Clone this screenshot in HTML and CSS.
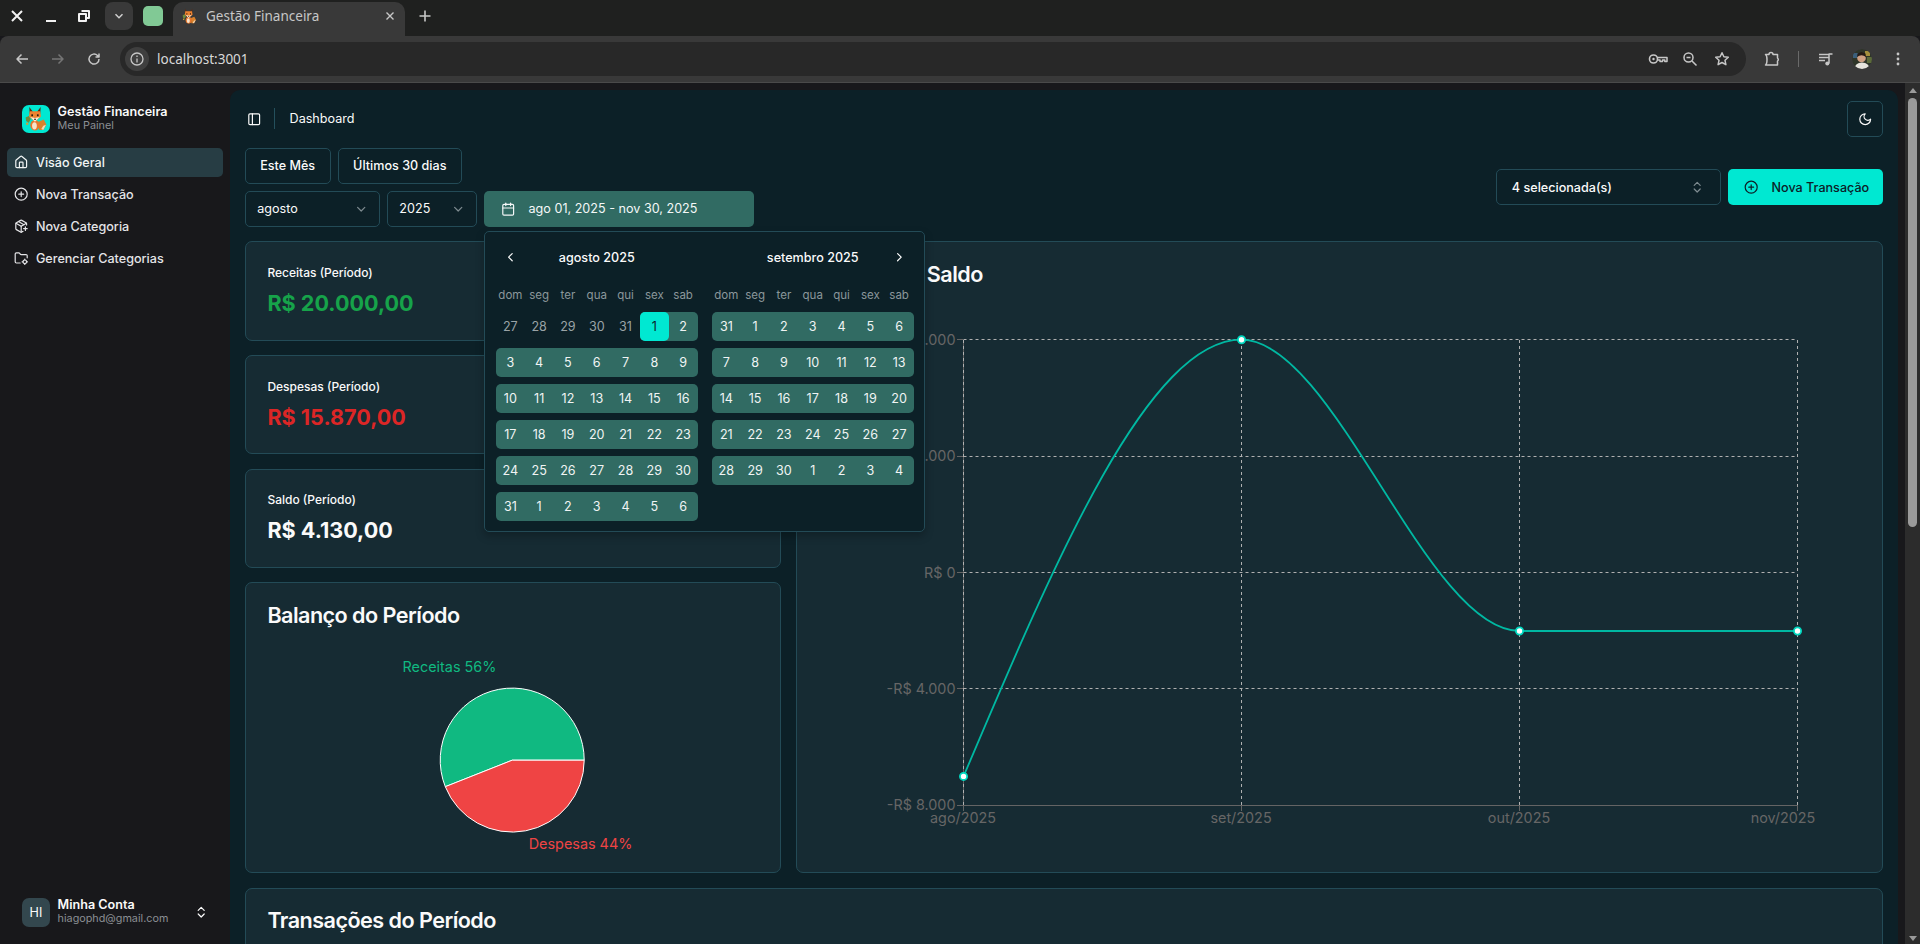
FILE: index.html
```html
<!DOCTYPE html>
<html lang="pt-BR">
<head>
    <meta charset="UTF-8">
    <title>Gestão Financeira</title>
    <link rel="stylesheet" href="styles.css">
</head>
<body>
    <svg class="icon-defs">
        <symbol id="i-panel" viewBox="0 0 24 24"><rect x="3" y="3" width="18" height="18" rx="2"/><path d="M9 3v18"/></symbol>
        <symbol id="i-house" viewBox="0 0 24 24"><path d="M15 21v-8a1 1 0 0 0-1-1h-4a1 1 0 0 0-1 1v8"/><path d="M3 10a2 2 0 0 1 .709-1.528l7-5.999a2 2 0 0 1 2.582 0l7 5.999A2 2 0 0 1 21 10v9a2 2 0 0 1-2 2H5a2 2 0 0 1-2-2z"/></symbol>
        <symbol id="i-plus-circle" viewBox="0 0 24 24"><circle cx="12" cy="12" r="10"/><path d="M8 12h8"/><path d="M12 8v8"/></symbol>
        <symbol id="i-package" viewBox="0 0 24 24"><path d="M16 16h6"/><path d="M19 13v6"/><path d="M21 10V8a2 2 0 0 0-1-1.730l-7-4a2 2 0 0 0-2 0l-7 4A2 2 0 0 0 3 8v8a2 2 0 0 0 1 1.730l7 4a2 2 0 0 0 2 0l2-1.140"/><path d="m7.500 4.270 9 5.150"/><path d="M3.290 7 12 12l8.710-5"/><path d="M12 22V12"/></symbol>
        <symbol id="i-folder" viewBox="0 0 24 24"><path d="M10.300 20H4a2 2 0 0 1-2-2V5a2 2 0 0 1 2-2h3.900a2 2 0 0 1 1.690.9l.81 1.200a2 2 0 0 0 1.670.9H20a2 2 0 0 1 2 2v3.300"/><circle cx="18" cy="18" r="3"/><path d="M18 13.500V15"/><path d="M18 21v1.500"/><path d="M22.500 18H21"/><path d="M15 18h-1.500"/></symbol>
        <symbol id="i-moon" viewBox="0 0 24 24"><path d="M12 3a6 6 0 0 0 9 9 9 9 0 1 1-9-9Z"/></symbol>
        <symbol id="i-down" viewBox="0 0 24 24"><path d="m6 9 6 6 6-6"/></symbol>
        <symbol id="i-updown" viewBox="0 0 24 24"><path d="m7 15 5 5 5-5"/><path d="m7 9 5-5 5 5"/></symbol>
        <symbol id="i-left" viewBox="0 0 24 24"><path d="m15 18-6-6 6-6"/></symbol>
        <symbol id="i-right" viewBox="0 0 24 24"><path d="m9 18 6-6-6-6"/></symbol>
        <symbol id="i-calendar" viewBox="0 0 24 24"><path d="M8 2v4"/><path d="M16 2v4"/><rect x="3" y="4" width="18" height="18" rx="2"/><path d="M3 10h18"/></symbol>
        <symbol id="i-fox" viewBox="0 0 24 24">
            <path fill="#d9822b" d="M15 15l5-2 2.500 5-3 5h-4z"/>
            <path fill="#f4d9b8" d="M19.500 19l2.500-1-2.500 5-2-1z"/>
            <ellipse cx="11.500" cy="18.500" rx="4.500" ry="5" fill="#e8762a"/>
            <ellipse cx="11" cy="19" rx="2.300" ry="3.500" fill="#f6e3cc"/>
            <path fill="#6f8a3c" d="M2.500 11l3-1.500 2 3-2 3.500-2.500-1.500z"/>
            <circle cx="4" cy="17" r="1.200" fill="#c9a03c"/>
            <path fill="#5a2c14" d="M6 1l3.500 4.500L6.500 8zM17 1l-3.500 4.500L16.500 8z"/>
            <path fill="#ee8330" d="M6.500 5h10l.8 5-5.800 5-5.800-5z"/>
            <path fill="#fbeedd" d="M7 10.500l4.500 1 4.500-1-4.500 4.500z"/>
            <rect x="8" y="8" width="1.600" height="1.800" fill="#2a1a10"/>
            <rect x="13.400" y="8" width="1.600" height="1.800" fill="#2a1a10"/>
            <rect x="10.800" y="12.200" width="1.500" height="1.200" fill="#2a1a10"/>
        </symbol>
    </svg>

    <div class="browser-tabs">
        <span class="win-btn"><svg class="chrome-icon" viewBox="0 0 16 16"><path d="M3 3l10 10M13 3L3 13" stroke-width="2"/></svg></span>
        <span class="win-btn"><svg class="chrome-icon" viewBox="0 0 16 16"><path d="M3 13h10" stroke-width="2"/></svg></span>
        <span class="win-btn win-btn-narrow"><svg class="chrome-icon" viewBox="0 0 16 16"><path d="M5.500 3h7.500v7h-3M3 6h7v7H3z" stroke-width="2"/></svg></span>
        <span class="tab-list-btn"><svg class="icon-sm" viewBox="0 0 24 24"><use href="#i-down"/></svg></span>
        <span class="tab-group"></span>
        <div class="tab">
            <svg class="tab-favicon"><use href="#i-fox"/></svg>
            <span class="tab-title">Gestão Financeira</span>
            <svg class="chrome-icon tab-close" viewBox="0 0 16 16"><path d="M4 4l8 8M12 4l-8 8" stroke-width="1.600"/></svg>
        </div>
        <span class="new-tab"><svg class="chrome-icon" viewBox="0 0 16 16"><path d="M8 2.500v11M2.500 8h11" stroke-width="1.600"/></svg></span>
    </div>

    <div class="browser-bar">
        <span class="bar-btn"><svg class="chrome-icon" viewBox="0 0 16 16"><path d="M14 8H3M7.500 3.500L3 8l4.500 4.500" stroke-width="1.500"/></svg></span>
        <span class="bar-btn bar-btn-off"><svg class="chrome-icon" viewBox="0 0 16 16"><path d="M2 8h11M8.500 3.500L13 8l-4.500 4.500" stroke-width="1.500"/></svg></span>
        <span class="bar-btn"><svg class="chrome-icon" viewBox="0 0 16 16"><path d="M13 8a5 5 0 1 1-1.500-3.500L13 6M13 2.500V6H9.500" stroke-width="1.500"/></svg></span>
        <div class="omnibox">
            <span class="site-info"><svg class="chrome-icon" viewBox="0 0 16 16"><circle cx="8" cy="8" r="6" stroke-width="1.300"/><path d="M8 7.500V11.500M8 4.600v1.300" stroke-width="1.300"/></svg></span>
            <span class="url">localhost:3001</span>
            <span class="omni-btn"><svg class="chrome-icon chrome-icon-wide" viewBox="0 0 20 16"><circle cx="5.500" cy="8" r="4" stroke-width="1.600"/><circle cx="5.500" cy="8" r="1.200" fill="#c7c7c7" stroke="none"/><path d="M9.500 6.500h9.500v4h-2.200V9h-2.300v1.500h-2.500V9H9.500" stroke-width="1.500"/></svg></span>
            <span class="omni-btn"><svg class="chrome-icon" viewBox="0 0 16 16"><circle cx="6.500" cy="6.500" r="4.500" stroke-width="1.500"/><path d="M4.500 6.500h4M10 10l4.500 4.500" stroke-width="1.500"/></svg></span>
            <span class="omni-btn"><svg class="chrome-icon" viewBox="0 0 16 16"><path d="M8 1.800l1.900 4 4.400.5-3.300 3 .9 4.400L8 11.500l-3.900 2.200.9-4.400-3.300-3 4.400-.5z" stroke-width="1.500"/></svg></span>
        </div>
        <span class="bar-btn bar-btn-ext"><svg class="chrome-icon" viewBox="0 0 16 16"><path d="M1.500 3.500h3.500a2 2 0 0 1 4 0h4.500v3.500a1.800 1.800 0 0 1 0 3v4H1.500c1.500-1 1.500-4 1.500-5.500s0-4-1.500-5z" stroke-width="1.500"/></svg></span>
        <span class="bar-sep"></span>
        <span class="bar-btn"><svg class="chrome-icon" viewBox="0 0 16 16"><path d="M1 3.500h9.500M1 6.500h9.500M1 9.500h6M11 12.500V3h3.500" stroke-width="1.500"/><circle cx="9.300" cy="12.500" r="2" fill="#c7c7c7" stroke="none"/></svg></span>
        <span class="bar-btn">
            <svg class="profile" viewBox="0 0 20 20">
                <circle cx="10" cy="10" r="10" fill="#2e3528"/>
                <path d="M1 4h6v5H1z" fill="#3b5f7a"/>
                <path d="M13 2h5v5h-5z" fill="#a38f3c"/>
                <path d="M15 8h5v6h-5z" fill="#5b6a3a"/>
                <circle cx="9.500" cy="9" r="4.300" fill="#cfa183"/>
                <path d="M5 8q4.500-3.500 9 0l-.5-3.500-4-1.500-4 1.500z" fill="#241a14"/>
                <path d="M2.500 20q.5-6.500 7.500-6.500T17.500 20z" fill="#e6e4dd"/>
            </svg>
        </span>
        <span class="bar-btn"><svg class="chrome-icon" viewBox="0 0 16 16"><circle cx="8" cy="3" r="1.400" fill="#c7c7c7" stroke="none"/><circle cx="8" cy="8" r="1.400" fill="#c7c7c7" stroke="none"/><circle cx="8" cy="13" r="1.400" fill="#c7c7c7" stroke="none"/></svg></span>
    </div>

    <div class="viewport">
        <aside class="sidebar">
            <div class="brand">
                <span class="brand-logo"><svg class="brand-fox"><use href="#i-fox"/></svg></span>
                <div class="brand-text">
                    <span class="brand-name">Gestão Financeira</span>
                    <span class="brand-sub">Meu Painel</span>
                </div>
            </div>
            <nav class="nav">
                <a class="nav-item active"><svg class="icon"><use href="#i-house"/></svg>Visão Geral</a>
                <a class="nav-item"><svg class="icon"><use href="#i-plus-circle"/></svg>Nova Transação</a>
                <a class="nav-item"><svg class="icon"><use href="#i-package"/></svg>Nova Categoria</a>
                <a class="nav-item"><svg class="icon"><use href="#i-folder"/></svg>Gerenciar Categorias</a>
            </nav>
            <div class="account">
                <span class="account-avatar">HI</span>
                <div class="brand-text">
                    <span class="brand-name">Minha Conta</span>
                    <span class="brand-sub">hiagophd@gmail.com</span>
                </div>
                <svg class="icon account-chevron"><use href="#i-updown"/></svg>
            </div>
        </aside>

        <main class="inset">
            <header class="topbar">
                <svg class="icon topbar-toggle"><use href="#i-panel"/></svg>
                <span class="topbar-sep"></span>
                <span class="topbar-title">Dashboard</span>
                <button class="btn btn-theme"><svg class="icon"><use href="#i-moon"/></svg></button>
            </header>

            <div class="content">
                <div class="filters">
                    <div class="filters-left">
                        <div class="filter-row">
                            <button class="btn">Este Mês</button>
                            <button class="btn">Últimos 30 dias</button>
                        </div>
                        <div class="filter-row">
                            <div class="select select-month">agosto<svg class="icon icon-muted"><use href="#i-down"/></svg></div>
                            <div class="select select-year">2025<svg class="icon icon-muted"><use href="#i-down"/></svg></div>
                            <div class="date-wrap">
                                <button class="date-btn"><svg class="icon"><use href="#i-calendar"/></svg>ago 01, 2025 - nov 30, 2025</button>
                                <div class="popover">
                                    <div class="month">
                                        <div class="caption">
                                            <svg class="icon cal-nav"><use href="#i-left"/></svg>
                                            <span class="caption-label">agosto 2025</span>
                                            <span class="cal-nav"></span>
                                        </div>
                                        <div class="week weekdays"><span>dom</span><span>seg</span><span>ter</span><span>qua</span><span>qui</span><span>sex</span><span>sab</span></div>
                                        <div class="week"><span class="day out">27</span><span class="day out">28</span><span class="day out">29</span><span class="day out">30</span><span class="day out">31</span><span class="day start"><b>1</b></span><span class="day end">2</span></div>
                                        <div class="week range"><span class="day">3</span><span class="day">4</span><span class="day">5</span><span class="day">6</span><span class="day">7</span><span class="day">8</span><span class="day">9</span></div>
                                        <div class="week range"><span class="day">10</span><span class="day">11</span><span class="day">12</span><span class="day">13</span><span class="day">14</span><span class="day">15</span><span class="day">16</span></div>
                                        <div class="week range"><span class="day">17</span><span class="day">18</span><span class="day">19</span><span class="day">20</span><span class="day">21</span><span class="day">22</span><span class="day">23</span></div>
                                        <div class="week range"><span class="day">24</span><span class="day">25</span><span class="day">26</span><span class="day">27</span><span class="day">28</span><span class="day">29</span><span class="day">30</span></div>
                                        <div class="week range"><span class="day">31</span><span class="day">1</span><span class="day">2</span><span class="day">3</span><span class="day">4</span><span class="day">5</span><span class="day">6</span></div>
                                    </div>
                                    <div class="month">
                                        <div class="caption">
                                            <span class="cal-nav"></span>
                                            <span class="caption-label">setembro 2025</span>
                                            <svg class="icon cal-nav"><use href="#i-right"/></svg>
                                        </div>
                                        <div class="week weekdays"><span>dom</span><span>seg</span><span>ter</span><span>qua</span><span>qui</span><span>sex</span><span>sab</span></div>
                                        <div class="week range"><span class="day">31</span><span class="day">1</span><span class="day">2</span><span class="day">3</span><span class="day">4</span><span class="day">5</span><span class="day">6</span></div>
                                        <div class="week range"><span class="day">7</span><span class="day">8</span><span class="day">9</span><span class="day">10</span><span class="day">11</span><span class="day">12</span><span class="day">13</span></div>
                                        <div class="week range"><span class="day">14</span><span class="day">15</span><span class="day">16</span><span class="day">17</span><span class="day">18</span><span class="day">19</span><span class="day">20</span></div>
                                        <div class="week range"><span class="day">21</span><span class="day">22</span><span class="day">23</span><span class="day">24</span><span class="day">25</span><span class="day">26</span><span class="day">27</span></div>
                                        <div class="week range"><span class="day">28</span><span class="day">29</span><span class="day">30</span><span class="day">1</span><span class="day">2</span><span class="day">3</span><span class="day">4</span></div>
                                    </div>
                                </div>
                            </div>
                        </div>
                    </div>
                    <div class="filters-right">
                        <div class="select select-accounts">4 selecionada(s)<svg class="icon icon-muted"><use href="#i-updown"/></svg></div>
                        <button class="btn-primary"><svg class="icon"><use href="#i-plus-circle"/></svg>Nova Transação</button>
                    </div>
                </div>

                <div class="dash-grid">
                    <section class="card kpi">
                        <p class="kpi-label">Receitas (Período)</p>
                        <p class="kpi-value green">R$ 20.000,00</p>
                    </section>
                    <section class="card chart-card">
                        <h2 class="card-title">Gráfico do Saldo</h2>
                        <svg class="line-chart" viewBox="818.200 300 1042 550.800">
                            <path class="axis" d="M963.500 805.500H1797.500M957 339.500H963M957 456.500H963M957 572.500H963M957 688.500H963M957 805.500H963M963.500 805V811M1241.500 805V811M1519.500 805V811M1797.500 805V811M963.500 340V805"/>
                            <g class="grid">
                                <path d="M963.500 339.500H1797.500M963.500 456.500H1797.500M963.500 572.500H1797.500M963.500 688.500H1797.500"/>
                                <path d="M963.500 340V805M1241.500 340V805M1519.500 340V805M1797.500 340V805"/>
                            </g>
                            <g class="tick-y">
                                <text x="955.500" y="345">R$ 8.000</text>
                                <text x="955.500" y="461.400">R$ 4.000</text>
                                <text x="955.500" y="577.700">R$ 0</text>
                                <text x="955.500" y="694">-R$ 4.000</text>
                                <text x="955.500" y="810.300">-R$ 8.000</text>
                            </g>
                            <g class="tick-x">
                                <text x="963" y="823">ago/2025</text>
                                <text x="1241" y="823">set/2025</text>
                                <text x="1519" y="823">out/2025</text>
                                <text x="1783" y="823">nov/2025</text>
                            </g>
                            <path class="saldo-line" d="M963.500 776.400C1056 558.200 1148.800 339.700 1241.500 339.700C1334 339.700 1426.800 631 1519.500 631H1797.500"/>
                            <g class="saldo-dots">
                                <circle cx="963.500" cy="776.400" r="3.600"/>
                                <circle cx="1241.500" cy="339.700" r="3.600"/>
                                <circle cx="1519.500" cy="631" r="3.600"/>
                                <circle cx="1797.500" cy="631" r="3.600"/>
                            </g>
                        </svg>
                    </section>
                    <section class="card kpi">
                        <p class="kpi-label">Despesas (Período)</p>
                        <p class="kpi-value red">R$ 15.870,00</p>
                    </section>
                    <section class="card kpi">
                        <p class="kpi-label">Saldo (Período)</p>
                        <p class="kpi-value">R$ 4.130,00</p>
                    </section>
                    <section class="card pie-card">
                        <h2 class="card-title">Balanço do Período</h2>
                        <svg class="pie-chart" viewBox="267.400 640.800 491.200 216">
                            <path class="slice" fill="#10b981" d="M512.500 760H584.500A72 72 0 1 0 445.600 786.500Z"/>
                            <path class="slice" fill="#ef4444" d="M512.500 760L445.600 786.500A72 72 0 0 0 584.500 760Z"/>
                            <text class="pie-label" x="496.700" y="672" text-anchor="end" fill="#10b981">Receitas 56%</text>
                            <text class="pie-label" x="529" y="848.500" fill="#ef4444">Despesas 44%</text>
                        </svg>
                    </section>
                    <section class="card wide-card">
                        <h2 class="card-title">Transações do Período</h2>
                    </section>
                </div>
            </div>
        </main>

        <div class="scrollbar">
            <span class="scroll-arrow up"></span>
            <span class="scroll-thumb"></span>
            <span class="scroll-arrow down"></span>
        </div>
    </div>
</body>
</html>
```

FILE: styles.css
```css
* {
    box-sizing: border-box;
}

body {
    margin: 0;
    height: 100vh;
    overflow: hidden;
    display: flex;
    flex-direction: column;
    background-color: #18181b;
    color: #fafafa;
    font-family: Inter, "Liberation Sans", sans-serif;
    font-size: 12.6px;
}

.icon-defs {
    display: none;
}

.icon {
    width: 14.4px;
    height: 14.4px;
    flex-shrink: 0;
    fill: none;
    stroke: currentColor;
    stroke-width: 2;
    stroke-linecap: round;
    stroke-linejoin: round;
}

.icon-muted {
    color: #7d8a8f;
}

.icon-sm {
    width: 14px;
    height: 14px;
    fill: none;
    stroke: #d0d0d0;
    stroke-width: 2.5;
}

/* browser chrome */
.browser-tabs {
    height: 36px;
    flex-shrink: 0;
    display: flex;
    align-items: flex-end;
    background-color: #1f201f;
}

.chrome-icon {
    width: 16px;
    height: 16px;
    fill: none;
    stroke: #c7c7c7;
    stroke-linejoin: round;
}

.chrome-icon-wide {
    width: 20px;
}

.win-btn {
    width: 34px;
    height: 32px;
    margin-bottom: 4px;
    display: flex;
    align-items: center;
    justify-content: center;
}

.win-btn .chrome-icon {
    stroke: #f2f2f2;
}

.win-btn-narrow {
    width: 32px;
}

.tab-list-btn {
    width: 28px;
    height: 28px;
    margin: 0 0 6px 5px;
    border-radius: 8px;
    background-color: #393939;
    display: flex;
    align-items: center;
    justify-content: center;
}

.tab-group {
    width: 20px;
    height: 20px;
    margin: 0 0 10px 10px;
    border-radius: 5px;
    background-color: #81c995;
}

.tab {
    width: 232px;
    height: 34px;
    margin-left: 10px;
    padding: 0 8px 6px;
    display: flex;
    align-items: center;
    border-radius: 10px 10px 0 0;
    background-color: #393939;
}

.tab-favicon {
    width: 16px;
    height: 16px;
    flex-shrink: 0;
}

.tab-title {
    margin-left: 9px;
    flex: 1;
    color: #c7c7c7;
    font-family: "Noto Sans", sans-serif;
    font-size: 13.5px;
}

.tab-close {
    width: 14px;
    height: 14px;
}

.new-tab {
    width: 28px;
    height: 28px;
    margin: 0 0 6px 6px;
    display: flex;
    align-items: center;
    justify-content: center;
}

.browser-bar {
    height: 47px;
    flex-shrink: 0;
    padding: 0 4px;
    display: flex;
    align-items: center;
    border-radius: 8px 8px 0 0;
    border-bottom: 1px solid #4a4a4a;
    background-color: #393939;
}

.bar-btn {
    width: 36px;
    height: 34px;
    flex-shrink: 0;
    display: flex;
    align-items: center;
    justify-content: center;
}

.bar-btn-off .chrome-icon {
    stroke: #757575;
}

.bar-btn-ext {
    margin-left: 8px;
}

.bar-sep {
    width: 1px;
    height: 16px;
    margin: 0 9px 0 8px;
    flex-shrink: 0;
    background-color: #6a6a6a;
}

.omnibox {
    flex: 1;
    height: 34px;
    margin-left: 8px;
    padding: 0 8px 0 5px;
    display: flex;
    align-items: center;
    border-radius: 17px;
    background-color: #282828;
}

.site-info {
    width: 24px;
    height: 24px;
    border-radius: 50%;
    background-color: #3f3f3f;
    display: flex;
    align-items: center;
    justify-content: center;
}

.url {
    flex: 1;
    margin-left: 8px;
    color: #d8d8d8;
    font-family: "Noto Sans", sans-serif;
    font-size: 13.5px;
}

.omni-btn {
    width: 32px;
    display: flex;
    justify-content: center;
}

.profile {
    width: 20px;
    height: 20px;
    border-radius: 50%;
}

/* page frame */
.viewport {
    flex: 1;
    min-height: 0;
    display: flex;
}

.sidebar {
    width: 230.4px;
    flex-shrink: 0;
    display: flex;
    flex-direction: column;
    padding-top: 7.2px;
    background-color: #18181b;
}

.brand {
    margin-bottom: 7.2px;
    padding: 14.4px 21.6px 7.2px;
    display: flex;
    align-items: center;
    gap: 7.2px;
}

.brand-logo {
    width: 28.8px;
    height: 28.8px;
    border-radius: 7px;
    background-color: #00e8d2;
    display: flex;
    align-items: center;
    justify-content: center;
}

.brand-fox {
    width: 25px;
    height: 25px;
}

.brand-text {
    display: flex;
    flex-direction: column;
    line-height: 14.4px;
}

.brand-name {
    font-weight: 600;
}

.brand-sub {
    color: #8b8f94;
    font-size: 10.8px;
}

.nav {
    padding: 0 7.2px;
    display: flex;
    flex-direction: column;
    gap: 3.2px;
}

.nav-item {
    height: 28.8px;
    padding: 0 7.2px;
    display: flex;
    align-items: center;
    gap: 7.2px;
    border-radius: 5px;
    color: #e4e4e7;
    font-weight: 500;
}

.nav-item.active {
    background-color: #273d44;
    color: #f0f4f4;
}

.account {
    margin-top: auto;
    padding: 0 21.6px 17.3px 21.6px;
    display: flex;
    align-items: center;
    gap: 7.2px;
}

.account-avatar {
    width: 28.8px;
    height: 28.8px;
    border-radius: 7px;
    background-color: #33474e;
    display: flex;
    align-items: center;
    justify-content: center;
}

.account-chevron {
    margin-left: auto;
}

.inset {
    flex: 1;
    min-width: 0;
    margin: 7.2px 7.2px 0 0;
    overflow: hidden;
    border-radius: 10px 10px 0 0;
    background-color: #0c2027;
}

.scrollbar {
    width: 15px;
    flex-shrink: 0;
    padding-top: 5px;
    display: flex;
    flex-direction: column;
    align-items: center;
    background-color: #2c2c2c;
}

.scroll-thumb {
    width: 9px;
    height: 429px;
    margin-top: 5px;
    border-radius: 5px;
    background-color: #9a9a9a;
}

.scroll-arrow {
    width: 0;
    height: 0;
    border-left: 4.5px solid transparent;
    border-right: 4.5px solid transparent;
}

.scroll-arrow.up {
    border-bottom: 5px solid #9a9a9a;
}

.scroll-arrow.down {
    margin-top: auto;
    margin-bottom: 3px;
    border-top: 5px solid #9a9a9a;
}

/* top bar */
.topbar {
    padding: 10.8px 14.4px;
    display: flex;
    align-items: center;
}

.topbar-toggle {
    margin-left: 2.4px;
}

.topbar-sep {
    width: 1px;
    height: 21px;
    margin: 0 14.4px 0 12.6px;
    background-color: #24505c;
}

.btn-theme {
    width: 36px;
    margin-left: auto;
    padding: 0;
    justify-content: center;
}

/* filters */
.content {
    padding: 0 14.4px;
}

.btn {
    height: 36px;
    padding: 0 14.4px;
    display: flex;
    align-items: center;
    border: 1px solid #234b57;
    border-radius: 5px;
    background-color: #0c2027;
    color: #fafafa;
    font: 500 12.6px Inter, sans-serif;
}

.filters {
    display: flex;
    align-items: center;
    justify-content: space-between;
}

.filters-left {
    display: flex;
    flex-direction: column;
    gap: 7.2px;
}

.filter-row,
.filters-right {
    display: flex;
    gap: 7.2px;
}

.select {
    height: 36px;
    padding: 0 10.8px 0 11.4px;
    display: flex;
    align-items: center;
    justify-content: space-between;
    border: 1px solid #234b57;
    border-radius: 5px;
}

.select-month {
    width: 135px;
}

.select-year {
    width: 90px;
}

.select-accounts {
    width: 225px;
    padding: 0 15px;
    font-weight: 500;
}

.date-wrap {
    position: relative;
}

.date-btn {
    width: 270px;
    height: 36px;
    padding: 0 17px;
    display: flex;
    align-items: center;
    gap: 13px;
    border: 0;
    border-radius: 5px;
    background-color: #316b63;
    color: #f4f8f8;
    font: 400 12.6px Inter, sans-serif;
}

.btn-primary {
    width: 155.4px;
    height: 36px;
    padding: 0 14.4px 0 15.6px;
    display: flex;
    align-items: center;
    gap: 13.5px;
    border: 0;
    border-radius: 5px;
    background-color: #00e8d2;
    color: #0c2027;
    font: 500 12.6px Inter, sans-serif;
    white-space: nowrap;
}

/* calendar popover */
.popover {
    position: absolute;
    z-index: 5;
    top: 40px;
    left: 0;
    display: flex;
    gap: 14.4px;
    padding: 10.8px;
    border: 1px solid #234b57;
    border-radius: 5px;
    background-color: #0c2027;
    box-shadow: 0 4px 8px rgba(0, 0, 0, 0.25);
}

.month {
    width: 201.6px;
}

.caption {
    height: 28.8px;
    margin-bottom: 14.4px;
    display: flex;
    align-items: center;
    justify-content: space-between;
}

.caption-label {
    font-weight: 500;
}

.cal-nav {
    width: 28.8px;
    padding: 0 7.2px;
}

.week {
    display: grid;
    grid-template-columns: repeat(7, 28.8px);
    margin-top: 7.2px;
}

.weekdays {
    height: 18px;
    margin-top: 0;
    margin-bottom: 8px;
    align-items: center;
    justify-items: center;
    color: #8b979b;
    font-size: 11.52px;
}

.weekdays + .week {
    margin-top: 0;
}

.day {
    height: 28.8px;
    display: flex;
    align-items: center;
    justify-content: center;
    color: #f0f4f4;
}

.range {
    border-radius: 5px;
    background-color: #316b63;
}

.day.out {
    color: #9aa3a6;
}

.day.start {
    border-radius: 5px 0 0 5px;
    background-color: #316b63;
}

.day.start b {
    width: 100%;
    height: 100%;
    display: flex;
    align-items: center;
    justify-content: center;
    border-radius: 5px;
    background-color: #00e8d2;
    color: #0c2027;
    font-weight: 400;
}

.day.end {
    border-radius: 0 5px 5px 0;
    background-color: #316b63;
}

/* dashboard grid */
.dash-grid {
    margin-top: 14.4px;
    display: grid;
    grid-template-columns: repeat(3, 1fr);
    gap: 14.4px;
}

.card {
    padding: 21.6px;
    border: 1px solid #234b57;
    border-radius: 7px;
    background-color: #162b33;
}

.chart-card {
    grid-column: 2 / 4;
    grid-row: 1 / 5;
}

.pie-card {
    padding-bottom: 15.6px;
}

.wide-card {
    grid-column: 1 / 4;
    height: 220px;
}

.kpi-label {
    margin: 0;
    line-height: 18px;
    font-size: 12px;
    font-weight: 500;
}

.kpi-value {
    margin: 7.2px 0 0;
    line-height: 28.8px;
    font-size: 21.6px;
    font-weight: 700;
}

.green {
    color: #16a34a;
}

.red {
    color: #dc2626;
}

.card-title {
    margin: 0;
    line-height: 21.6px;
    font-size: 21.6px;
    font-weight: 600;
    letter-spacing: -0.54px;
}

/* charts */
.line-chart,
.pie-chart {
    display: block;
    width: 100%;
    margin-top: 14.4px;
}

.line-chart {
    height: 550.8px;
}

.pie-chart {
    height: 216px;
}

.grid path {
    fill: none;
    stroke: #b4b4b4;
    stroke-dasharray: 3 3;
}

.axis {
    fill: none;
    stroke: #666;
}

.tick-y text,
.tick-x text,
.pie-label {
    font-size: 14.4px;
}

.tick-y text {
    fill: #666;
    text-anchor: end;
}

.tick-x text {
    fill: #666;
    text-anchor: middle;
}

.saldo-line {
    fill: none;
    stroke: #00b8a2;
    stroke-width: 1.8;
}

.saldo-dots circle {
    fill: #fff;
    stroke: #00d8c0;
    stroke-width: 1.8;
}

.slice {
    stroke: #fff;
}
```
